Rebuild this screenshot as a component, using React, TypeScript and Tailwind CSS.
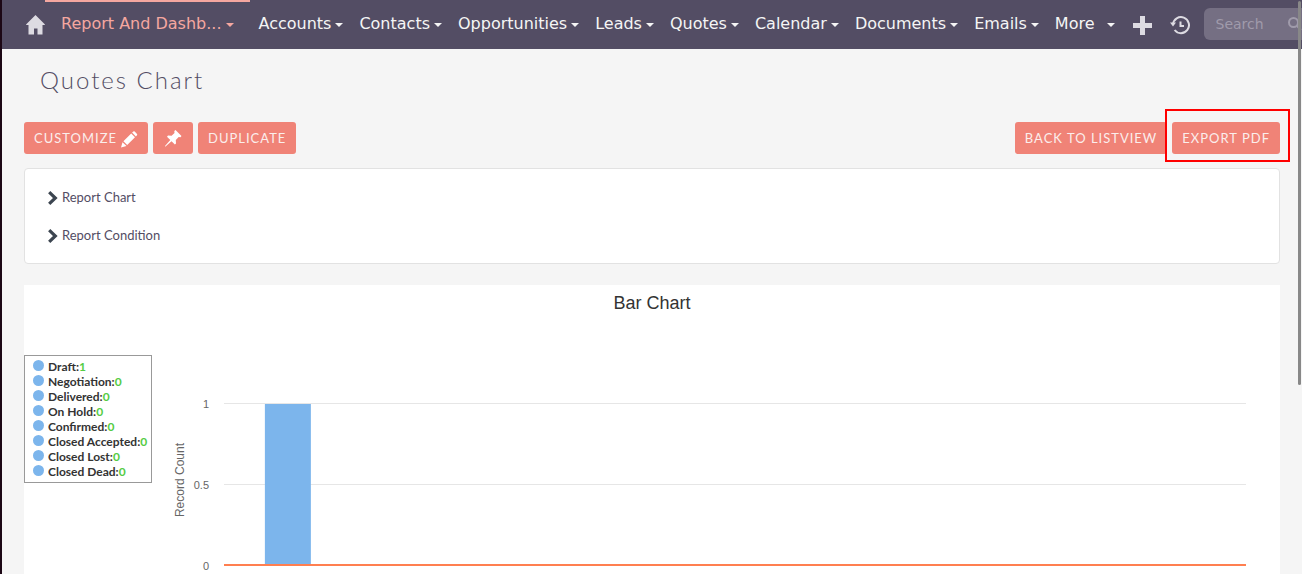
import React from "react";

const navItems = ["Accounts", "Contacts", "Opportunities", "Leads", "Quotes", "Calendar", "Documents", "Emails"];

const stages = [
  { name: "Draft", count: 1 },
  { name: "Negotiation", count: 0 },
  { name: "Delivered", count: 0 },
  { name: "On Hold", count: 0 },
  { name: "Confirmed", count: 0 },
  { name: "Closed Accepted", count: 0 },
  { name: "Closed Lost", count: 0 },
  { name: "Closed Dead", count: 0 },
];

const plotHeight = 161;

const actionClass =
  "flex h-8 items-center rounded-[3px] bg-[#f08377] px-2.5 pt-0.5 text-[13px] tracking-[1px] text-[#fbeeec] uppercase whitespace-nowrap";

function Caret() {
  return (
    <svg width="8" height="4" viewBox="0 0 8 4" fill="currentColor" aria-hidden="true">
      <path d="M0 0h8L4 4z" />
    </svg>
  );
}

function HomeIcon() {
  return (
    <svg width="19" height="20" viewBox="0 0 19 20" fill="currentColor" aria-hidden="true">
      <path d="M9.500 0 19 9.600 18.600 10H16.500V19.500H11.500V13.500H8V19.500H2.500V10H.4L0 9.600Z" />
    </svg>
  );
}

function PlusIcon() {
  return (
    <svg width="19" height="19" viewBox="0 0 19 19" fill="currentColor" aria-hidden="true">
      <path d="M7 0h5v7h7v5h-7v7H7v-7H0V7h7z" />
    </svg>
  );
}

function HistoryIcon() {
  return (
    <svg width="20" height="19" viewBox="0 0 20 19" fill="none" stroke="currentColor" strokeWidth="2" aria-hidden="true">
      <path d="M3 8.500A8 8 0 1 1 4.600 14" />
      <path d="M10.500 5.500V10H14" />
      <path d="M0 6.500H6L3 10.500Z" fill="currentColor" stroke="none" />
    </svg>
  );
}

function PencilIcon() {
  return (
    <svg width="17" height="17" viewBox="0 0 17 17" fill="#fff" aria-hidden="true">
      <path d="M0 16.500 1.500 11.200 5.500 15ZM2.400 10.200 10.200 2.500 14 6.300 6.200 14.100ZM11.100 1.600 12.300.5Q13 0 13.700.5L16 2.900Q16.500 3.500 16 4.200L14.900 5.400Z" />
    </svg>
  );
}

function PinIcon() {
  return (
    <svg width="17" height="17" viewBox="0 0 17 17" fill="#fff" aria-hidden="true">
      <path d="M10.500 0 16.500 6 15.500 7.300 13.700 7 10.800 10 11 13.500 9.900 14.500 6.500 11.200.5 16.500H0V16L5.300 10 2 6.700 3 5.600 6.600 5.800 9.500 2.900 9.300 1.100Z" />
    </svg>
  );
}

function ChevronIcon() {
  return (
    <svg width="10" height="14" viewBox="0 0 10 14" fill="none" stroke="#3c4550" strokeWidth="3.200" aria-hidden="true">
      <path d="M1.200 1.200 7.300 7 1.200 12.800" />
    </svg>
  );
}

function NavBar() {
  return (
    <nav className="flex h-[49px] items-start overflow-hidden bg-[#534d64] font-['DejaVu_Sans',sans-serif] text-base leading-6 text-[#f5f5f5] whitespace-nowrap">
      <a href="#home" aria-label="Home" className="ml-6 mt-[15px] shrink-0 text-[#dddbe2]">
        <HomeIcon />
      </a>
      <a
        href="#reports"
        className="flex h-full shrink-0 items-start gap-[5px] border-t-2 border-[#f5a7a0] pt-2.5 pr-4 pl-4 text-[#f5a7a0]"
      >
        Report And Dashb...
        <span className="mt-[11px]"><Caret /></span>
      </a>
      <div className="flex shrink-0 gap-4 pt-3 pl-2">
        {navItems.map((item) => (
          <a key={item} href={"#" + item} className="flex items-center gap-1">
            {item}
            <span className="mt-px"><Caret /></span>
          </a>
        ))}
        <a href="#more" className="flex items-center gap-3">
          More
          <span className="mt-px"><Caret /></span>
        </a>
      </div>
      <button type="button" aria-label="Create" className="ml-[18px] mt-4 shrink-0 text-[#dddbe2]">
        <PlusIcon />
      </button>
      <button type="button" aria-label="Recently viewed" className="ml-[18px] mt-4 shrink-0 text-[#dddbe2]">
        <HistoryIcon />
      </button>
      <label className="ml-3.5 mt-2 flex h-8 shrink-0 items-center rounded-md bg-[#756f83] pr-3 pl-3 text-sm text-[#a09bab]">
        <input type="text" aria-label="Search" placeholder="Search" className="w-[72px] bg-transparent outline-none placeholder:text-[#a09bab]" />
        <svg width="14" height="14" viewBox="0 0 14 14" fill="none" stroke="currentColor" strokeWidth="2" aria-hidden="true">
          <circle cx="5.500" cy="5.500" r="4.500" />
          <path d="m9 9 4 4" />
        </svg>
      </label>
    </nav>
  );
}

function Toolbar() {
  return (
    <div className="flex justify-between">
      <div className="flex gap-[5px]">
        <button type="button" className={actionClass + " gap-1"}>
          Customize <PencilIcon />
        </button>
        <button type="button" aria-label="Pin" className="flex h-8 w-10 items-center justify-center rounded-[3px] bg-[#f08377]">
          <PinIcon />
        </button>
        <button type="button" className={actionClass}>Duplicate</button>
      </div>
      <div className="flex gap-[5px]">
        <button type="button" className={actionClass}>Back to ListView</button>
        <div className="relative">
          <button type="button" className={actionClass}>Export PDF</button>
          <span className="pointer-events-none absolute -top-[13px] -right-2.5 -bottom-2 -left-[7px] border-2 border-[#f00]" />
        </div>
      </div>
    </div>
  );
}

function Legend() {
  return (
    <ul className="mt-[34px] w-32 shrink-0 self-start border border-[#999] py-[3px] pl-2 text-xs leading-[15px] font-bold text-[#333] whitespace-nowrap">
      {stages.map((stage) => (
        <li key={stage.name} className="flex gap-1">
          <span className="mt-px size-[11px] rounded-full bg-[#7cb5ec]" />
          <span>
            {stage.name}:<span className="text-[#55cc44]">{stage.count}</span>
          </span>
        </li>
      ))}
    </ul>
  );
}

function Plot() {
  return (
    <div className="flex grow pt-[75px] pr-[34px] font-['Liberation_Sans',sans-serif] text-[#666]">
      <div className="flex h-[168px] w-14 items-center justify-center text-xs">
        <span className="rotate-180 [writing-mode:vertical-rl]">Record Count</span>
      </div>
      <div className="-ml-4 flex h-[178px] w-8 flex-col justify-between pr-[15px] text-right text-[11px] leading-4">
        <span>1</span>
        <span>0.5</span>
        <span>0</span>
      </div>
      <svg className="mt-[7px] h-[163px] grow" role="img" aria-label="Record count by quote stage">
        <line x1="0" x2="100%" y1=".5" y2=".5" stroke="#e6e6e6" />
        <line x1="0" x2="100%" y1="81.500" y2="81.500" stroke="#e6e6e6" />
        {stages.map((stage, i) => (
          <rect
            key={stage.name}
            x={(i + 0.5) * 12.5 - 2.25 + "%"}
            y={plotHeight - stage.count * (plotHeight - 1)}
            width="4.5%"
            height={stage.count * (plotHeight - 1)}
            fill="#7cb5ec"
          />
        ))}
        <rect x="0" y="161" width="100%" height="2" fill="#ff7f50" />
      </svg>
    </div>
  );
}

export default function App() {
  return (
    <div className="relative flex min-h-screen flex-col overflow-hidden border-l-2 border-[#1c0715] bg-[#f5f5f5] font-[Lato,sans-serif]">
      <NavBar />
      <main className="flex grow flex-col pr-[22px] pl-[22px]">
        <h1 className="mt-[15px] mb-[26px] pl-4 text-2xl leading-8 font-light tracking-[2px] text-[#534d64]">Quotes Chart</h1>
        <Toolbar />
        <section className="mt-3.5 flex h-24 flex-col items-start gap-[18px] rounded border border-[#e2e2e2] bg-white pt-[18px] pl-[23px] text-[13px] leading-5 text-[#534d64]">
          <button type="button" className="flex items-center gap-1">
            <span className="mt-0.5"><ChevronIcon /></span>
            Report Chart
          </button>
          <button type="button" className="flex items-center gap-1">
            <span className="mt-0.5"><ChevronIcon /></span>
            Report Condition
          </button>
        </section>
        <section className="mt-[21px] flex grow flex-col bg-white">
          <h2 className="pt-2 text-center font-['Liberation_Sans',sans-serif] text-lg leading-5 text-[#333]">Bar Chart</h2>
          <div className="flex pt-2">
            <Legend />
            <Plot />
          </div>
        </section>
      </main>
      <div className="absolute top-px right-px h-[384px] w-[3px] rounded-full bg-[#888]" />
    </div>
  );
}
